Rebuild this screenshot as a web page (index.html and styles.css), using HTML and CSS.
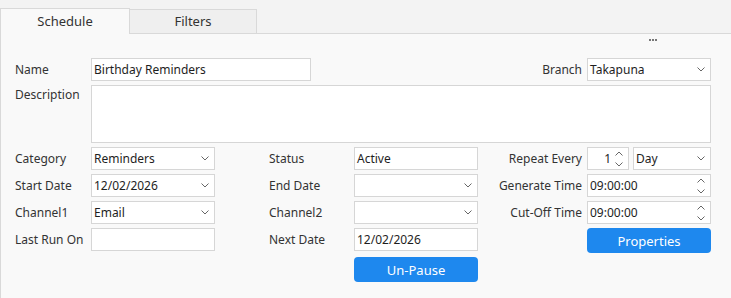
FILE: index.html
```html
<!DOCTYPE html>
<html lang="en">
<head>
    <meta charset="UTF-8">
    <title>Schedule</title>
    <link rel="stylesheet" href="styles.css">
</head>
<body>

<div class="tabs">
    <div class="tab active">Schedule</div>
    <div class="tab">Filters</div>
    <div class="tab-fill"></div>
</div>

<div class="panel">
    <div class="more"><span></span><span></span><span></span></div>

    <div class="form">
        <!-- row 1 -->
        <div class="lbl c1">Name</div>
        <div class="field wide c2">Birthday Reminders</div>
        <div class="lbl right c6">Branch</div>
        <div class="field select c7">Takapuna
            <svg class="chev" width="8" height="5" viewBox="0 0 8 5"><polyline points="0.5,0.5 4,4 7.5,0.5"/></svg>
        </div>

        <!-- row 2 -->
        <div class="lbl desc c1">Description</div>
        <div class="field area span-all"></div>

        <!-- row 3 -->
        <div class="lbl c1">Category</div>
        <div class="field select c2">Reminders
            <svg class="chev" width="8" height="5" viewBox="0 0 8 5"><polyline points="0.5,0.5 4,4 7.5,0.5"/></svg>
        </div>
        <div class="lbl c4">Status</div>
        <div class="field c5">Active</div>
        <div class="lbl right c6">Repeat Every</div>
        <div class="repeat c7">
            <div class="field spin">1
                <svg class="arrows" width="8" height="16" viewBox="0 0 8 16"><polyline points="0.5,4.5 4,1 7.5,4.5"/><polyline points="0.5,11.5 4,15 7.5,11.5"/></svg>
            </div>
            <div class="field select day">Day
                <svg class="chev" width="8" height="5" viewBox="0 0 8 5"><polyline points="0.5,0.5 4,4 7.5,0.5"/></svg>
            </div>
        </div>

        <!-- row 4 -->
        <div class="lbl c1">Start Date</div>
        <div class="field select c2">12/02/2026
            <svg class="chev" width="8" height="5" viewBox="0 0 8 5"><polyline points="0.5,0.5 4,4 7.5,0.5"/></svg>
        </div>
        <div class="lbl c4">End Date</div>
        <div class="field select c5">
            <svg class="chev" width="8" height="5" viewBox="0 0 8 5"><polyline points="0.5,0.5 4,4 7.5,0.5"/></svg>
        </div>
        <div class="lbl right c6">Generate Time</div>
        <div class="field select c7">09:00:00
            <svg class="arrows" width="8" height="16" viewBox="0 0 8 16"><polyline points="0.5,4.5 4,1 7.5,4.5"/><polyline points="0.5,11.5 4,15 7.5,11.5"/></svg>
        </div>

        <!-- row 5 -->
        <div class="lbl c1">Channel1</div>
        <div class="field select c2">Email
            <svg class="chev" width="8" height="5" viewBox="0 0 8 5"><polyline points="0.5,0.5 4,4 7.5,0.5"/></svg>
        </div>
        <div class="lbl c4">Channel2</div>
        <div class="field select c5">
            <svg class="chev" width="8" height="5" viewBox="0 0 8 5"><polyline points="0.5,0.5 4,4 7.5,0.5"/></svg>
        </div>
        <div class="lbl right c6">Cut-Off Time</div>
        <div class="field select c7">09:00:00
            <svg class="arrows" width="8" height="16" viewBox="0 0 8 16"><polyline points="0.5,4.5 4,1 7.5,4.5"/><polyline points="0.5,11.5 4,15 7.5,11.5"/></svg>
        </div>

        <!-- row 6 -->
        <div class="lbl c1">Last Run On</div>
        <div class="field c2"></div>
        <div class="lbl c4">Next Date</div>
        <div class="field c5">12/02/2026</div>
        <button class="btn c7">Properties</button>

        <!-- row 7 -->
        <button class="btn c5">Un-Pause</button>
    </div>
</div>

</body>
</html>
```

FILE: styles.css
```css
html, body {
    margin: 0;
    padding: 0;
    height: 298px;
    overflow: hidden;
}
body {
    font-family: 'Noto Sans', sans-serif;
    font-size: 12px;
    color: #333;
    background-color: #f3f3f3;
}
.tabs {
    display: flex;
    align-items: flex-end;
    height: 34px;
}
.tab {
    box-sizing: border-box;
    text-align: center;
    color: #333;
    font-size: 13px;
}
.tab.active {
    width: 130px;
    height: 26px;
    line-height: 24px;
    border: 1px solid #d9d9d9;
    border-bottom: none;
    background-color: #f9f9f9;
}
.tab:not(.active) {
    width: 127px;
    height: 25px;
    line-height: 23px;
    border: 1px solid #d9d9d9;
    border-left: none;
    background-color: #efefef;
}
.tab-fill {
    flex: 1;
    border-bottom: 1px solid #d9d9d9;
}
.panel {
    height: 264px;
    border-left: 1px solid #d9d9d9;
    background-color: #f9f9f9;
}
.more {
    height: 24px;
    box-sizing: border-box;
    padding: 5px 74px 0 0;
    display: flex;
    justify-content: flex-end;
    gap: 1px;
}
.more span {
    width: 2px;
    height: 2px;
    background-color: #777;
}
.form {
    display: grid;
    grid-template-columns: 76px 124px 54px 85px 124px 109px 124px;
    grid-template-rows: 23px 58px 23px 23px 23px 25px 25px;
    row-gap: 4px;
    padding-left: 14px;
    align-items: start;
}
.c1 { grid-column: 1; }
.c2 { grid-column: 2; }
.c4 { grid-column: 4; }
.c5 { grid-column: 5; }
.c6 { grid-column: 6; }
.c7 { grid-column: 7; }
.span-all { grid-column: 2 / 8; }
.lbl {
    line-height: 23px;
    white-space: nowrap;
    color: #333;
}
.lbl.right {
    text-align: right;
    padding-right: 5px;
}
.lbl.desc {
    line-height: 19px;
}
.field {
    box-sizing: border-box;
    height: 23px;
    border: 1px solid #d6d6d6;
    background-color: #fff;
    color: #1e1e1e;
    padding: 0 5px 0 2px;
    line-height: 21px;
    white-space: nowrap;
    display: flex;
    align-items: center;
    justify-content: space-between;
}
.field.wide {
    width: 220px;
}
.field.area {
    height: 58px;
}
.select svg, .spin svg {
    fill: none;
    stroke: #666;
    stroke-width: 1;
    flex-shrink: 0;
}
.select .chev {
    margin-left: auto;
}
.repeat {
    display: flex;
    gap: 4px;
}
.field.spin {
    width: 42px;
    justify-content: flex-end;
    gap: 4px;
}
.field.day {
    width: 78px;
}
.btn {
    box-sizing: border-box;
    height: 25px;
    border: none;
    border-radius: 4px;
    background-color: #1e88ee;
    color: #fff;
    font-family: 'Noto Sans', sans-serif;
    font-size: 13px;
    padding: 0;
    cursor: pointer;
}
```
